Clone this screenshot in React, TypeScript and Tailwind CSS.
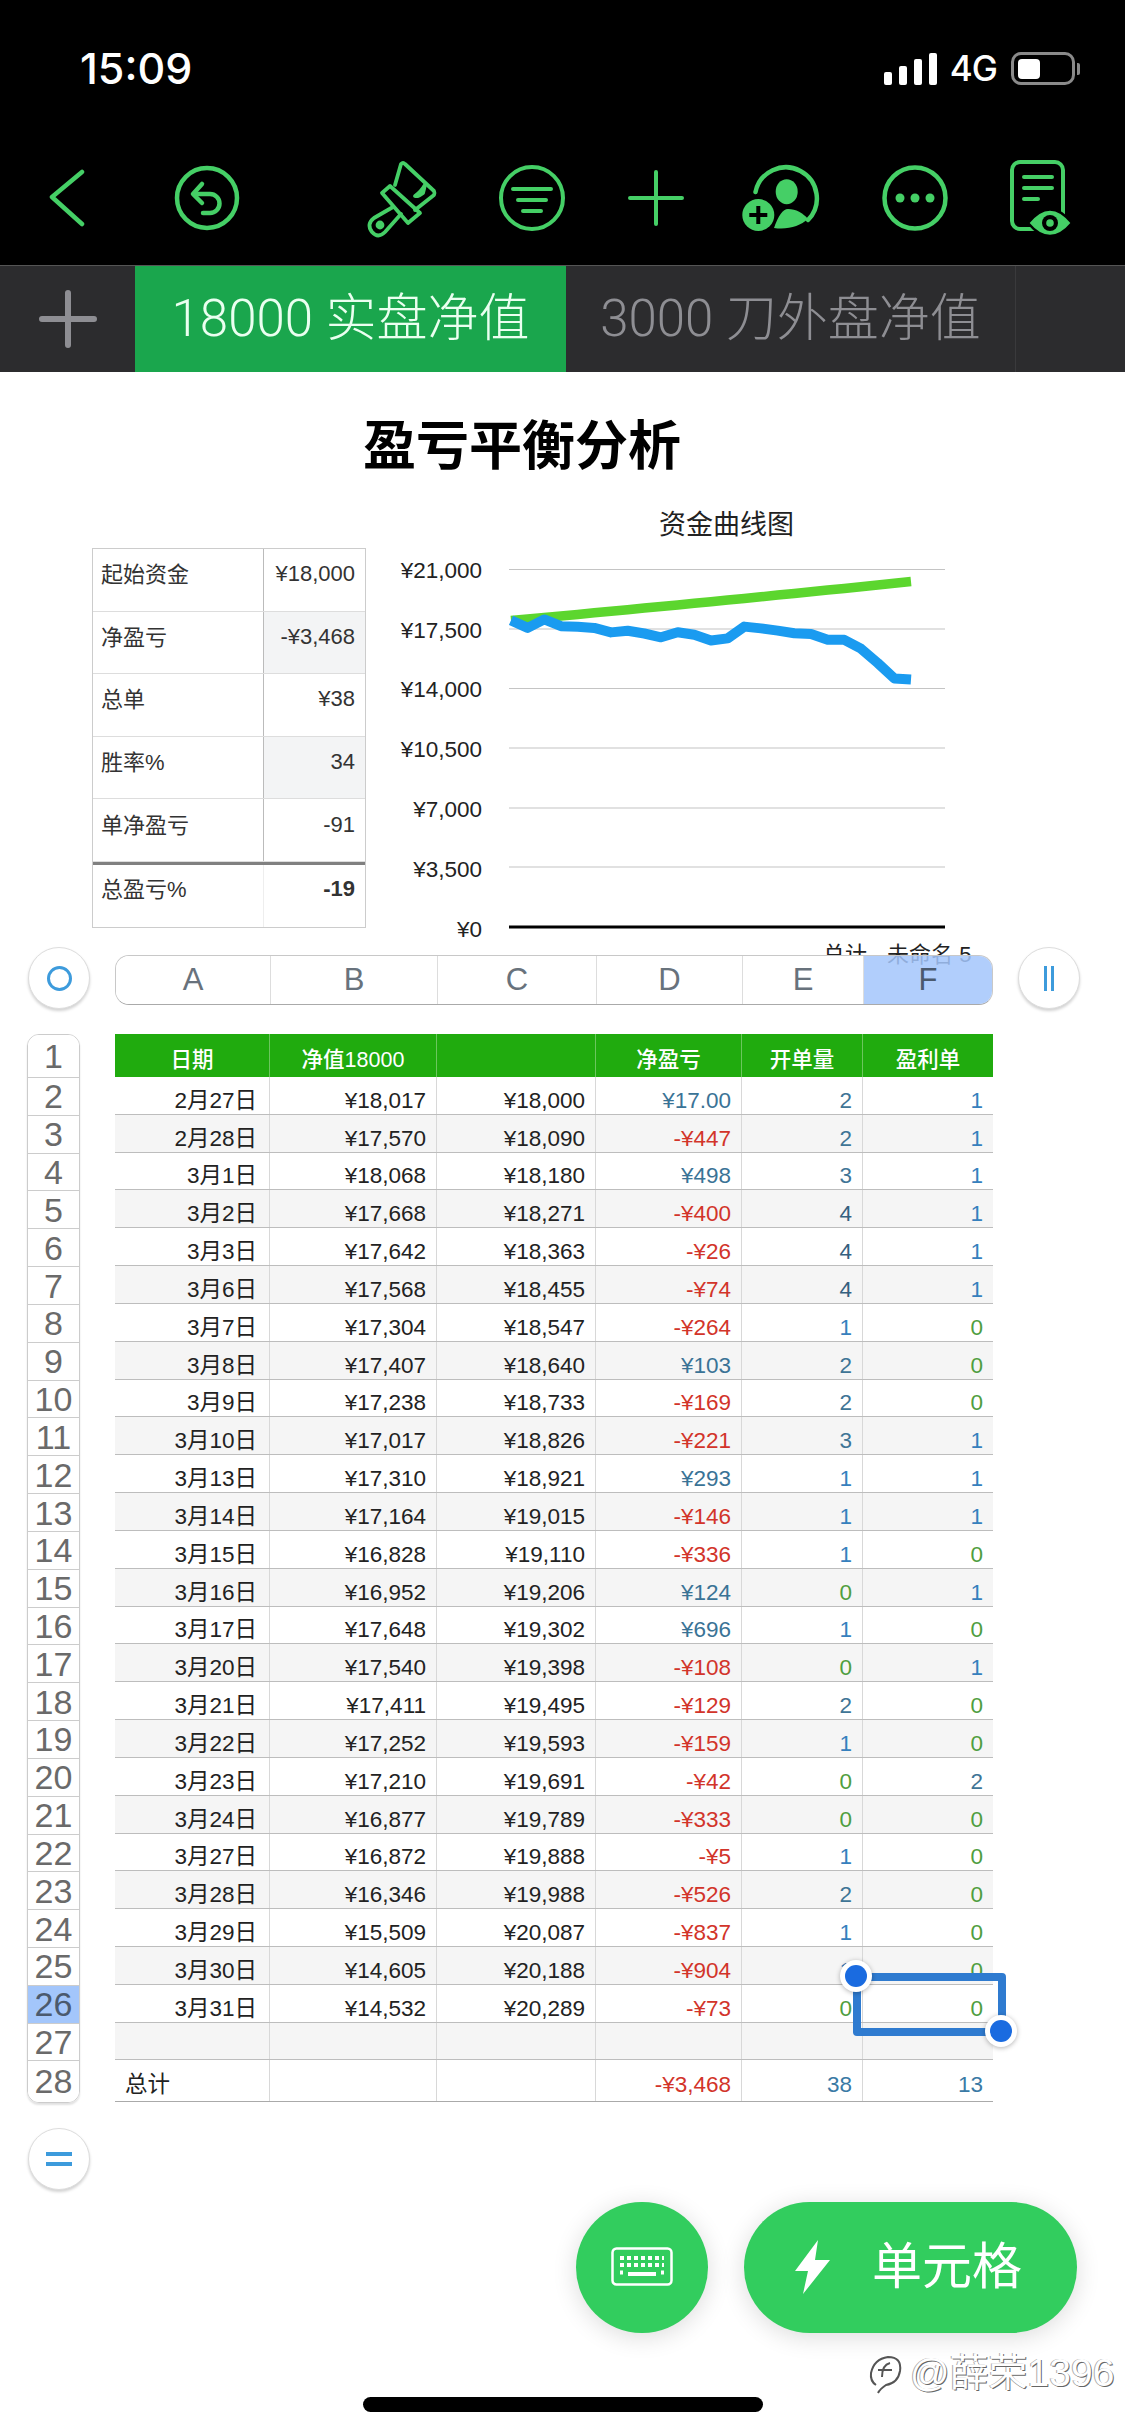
const rows: [string, string, string, string, number, number][] = [
  ["2月27日", "¥18,017", "¥18,000", "¥17.00", 2, 1],
  ["2月28日", "¥17,570", "¥18,090", "-¥447", 2, 1],
  ["3月1日", "¥18,068", "¥18,180", "¥498", 3, 1],
  ["3月2日", "¥17,668", "¥18,271", "-¥400", 4, 1],
  ["3月3日", "¥17,642", "¥18,363", "-¥26", 4, 1],
  ["3月6日", "¥17,568", "¥18,455", "-¥74", 4, 1],
  ["3月7日", "¥17,304", "¥18,547", "-¥264", 1, 0],
  ["3月8日", "¥17,407", "¥18,640", "¥103", 2, 0],
  ["3月9日", "¥17,238", "¥18,733", "-¥169", 2, 0],
  ["3月10日", "¥17,017", "¥18,826", "-¥221", 3, 1],
  ["3月13日", "¥17,310", "¥18,921", "¥293", 1, 1],
  ["3月14日", "¥17,164", "¥19,015", "-¥146", 1, 1],
  ["3月15日", "¥16,828", "¥19,110", "-¥336", 1, 0],
  ["3月16日", "¥16,952", "¥19,206", "¥124", 0, 1],
  ["3月17日", "¥17,648", "¥19,302", "¥696", 1, 0],
  ["3月20日", "¥17,540", "¥19,398", "-¥108", 0, 1],
  ["3月21日", "¥17,411", "¥19,495", "-¥129", 2, 0],
  ["3月22日", "¥17,252", "¥19,593", "-¥159", 1, 0],
  ["3月23日", "¥17,210", "¥19,691", "-¥42", 0, 2],
  ["3月24日", "¥16,877", "¥19,789", "-¥333", 0, 0],
  ["3月27日", "¥16,872", "¥19,888", "-¥5", 1, 0],
  ["3月28日", "¥16,346", "¥19,988", "-¥526", 2, 0],
  ["3月29日", "¥15,509", "¥20,087", "-¥837", 1, 0],
  ["3月30日", "¥14,605", "¥20,188", "-¥904", 1, 0],
  ["3月31日", "¥14,532", "¥20,289", "-¥73", 0, 0],
];

const summary = [
  { label: "起始资金", value: "¥18,000" },
  { label: "净盈亏", value: "-¥3,468", shaded: true },
  { label: "总单", value: "¥38" },
  { label: "胜率%", value: "34", shaded: true },
  { label: "单净盈亏", value: "-91" },
];

const axisLabels = ["¥21,000", "¥17,500", "¥14,000", "¥10,500", "¥7,000", "¥3,500", "¥0"];
const gridY = [14.5, 74, 133.5, 193, 253, 312];

function num(s: string) {
  return Number(s.replace(/[¥,]/g, ""));
}

function linePath(col: 1 | 2) {
  return rows
    .map((r, i) => {
      const x = 2 + (i * 400) / 24;
      const y = 372 - (num(r[col]) / 21000) * 357.5;
      return `${i === 0 ? "M" : "L"}${x.toFixed(1)} ${y.toFixed(1)}`;
    })
    .join(" ");
}

function countColor(n: number) {
  if (n === 0) return "text-[#4f9e3f]";
  if (n === 1) return "text-[#3680bd]";
  if (n === 4) return "text-[#35607f]";
  return "text-[#3f7596]";
}

function Toolbar() {
  const green = "#45cf66";
  return (
    <div className="flex h-[124px] items-center">
      <svg width="36" height="80" className="ml-[49px]" fill="none" stroke={green} strokeWidth="4.5" strokeLinecap="round" strokeLinejoin="round">
        <path d="M33 14 L3 39 L33 66" />
      </svg>
      <svg width="70" height="80" className="ml-[87px]" fill="none" stroke={green} strokeWidth="4.5" strokeLinecap="round" strokeLinejoin="round">
        <circle cx="35" cy="40" r="30" />
        <path d="M30 26 L21 36 L30 45" />
        <path d="M22 36 H38 a9.5 9.5 0 0 1 0 19 H31" />
      </svg>
      <svg width="80" height="80" className="ml-[121px]" fill="none" stroke={green} strokeWidth="3.8" strokeLinecap="round" strokeLinejoin="round">
        <path d="M32 27 L38 6 Q40 4 42 6 L71 33 Q72 35 71 37 L52 52" />
        <path d="M27 28 L19 35 L45 65 L57 55 Z" />
        <path d="M30 49 L11 60 Q3 66 9 74 Q15 81 22 74 L38 56" />
        <circle cx="17" cy="67" r="2.5" fill={green} />
        <path d="M62 27 L60 35 Q55 39 52 38 Q58 34 62 27 Z" fill={green} />
      </svg>
      <svg width="70" height="80" className="ml-[54px]" fill="none" stroke={green} strokeWidth="4" strokeLinecap="round">
        <circle cx="35" cy="40" r="31" />
        <path d="M16 31 H54 M21 42 H49 M26 53 H44" />
      </svg>
      <svg width="70" height="80" className="ml-[54px]" fill="none" stroke={green} strokeWidth="4" strokeLinecap="round">
        <path d="M35 14 V66 M9 40 H61" />
      </svg>
      <svg width="84" height="80" className="ml-[47px]" fill="none">
        <path d="M17.5 34 A31 31 0 1 1 70 62" stroke={green} strokeWidth="4.5" strokeLinecap="round" />
        <ellipse cx="48.7" cy="33.7" rx="11" ry="12.5" fill={green} />
        <path d="M36 70 C40 58 45 51 50 51 C58 51 65 55 70 61 C62 68 50 72 36 70 Z" fill={green} />
        <circle cx="20.3" cy="57" r="16" fill={green} />
        <path d="M20.3 48 V66 M11.3 57 H29.3" stroke="#000" strokeWidth="4" />
      </svg>
      <svg width="70" height="80" className="ml-[58px]" fill="none" stroke={green} strokeWidth="4.5">
        <circle cx="35" cy="40" r="30.5" />
        <circle cx="20" cy="40" r="4.5" fill={green} stroke="none" />
        <circle cx="35" cy="40" r="4.5" fill={green} stroke="none" />
        <circle cx="50" cy="40" r="4.5" fill={green} stroke="none" />
      </svg>
      <svg width="76" height="80" className="ml-[53px]" fill="none" stroke={green} strokeWidth="4" strokeLinecap="round">
        <rect x="9" y="4" width="51" height="67" rx="8" />
        <path d="M21 19 H49 M21 30 H49 M21 41 H35" />
        <path d="M25 65 Q47 38 69 65 Q47 91 25 65 Z" fill={green} stroke="#000" strokeWidth="2.5" />
        <circle cx="47" cy="65" r="8" fill="#000" stroke="none" />
        <circle cx="47" cy="65" r="3.8" fill={green} stroke="none" />
      </svg>
    </div>
  );
}

function StatusBar() {
  return (
    <div className="flex h-[136px] items-center justify-between pl-[80px] pr-[45px] pt-[1px] font-['Inter',sans-serif] text-white">
      <span className="text-[43px] font-medium">15:09</span>
      <div className="flex items-center">
        <div className="flex h-[32px] items-end gap-[7px]">
          <div className="h-[13px] w-[8px] rounded-[2px] bg-white" />
          <div className="h-[19px] w-[8px] rounded-[2px] bg-white" />
          <div className="h-[26px] w-[8px] rounded-[2px] bg-white" />
          <div className="h-[32px] w-[8px] rounded-[2px] bg-white" />
        </div>
        <span className="ml-[13px] text-[35px] font-medium tracking-[-1px]">4G</span>
        <div className="ml-[14px] flex h-[33px] w-[64px] items-center rounded-[10px] border-[3px] border-[#8a8a8a] pl-[4px]">
          <div className="h-[20px] w-[22px] rounded-[4px] bg-white" />
        </div>
        <div className="ml-[2px] h-[12px] w-[3px] rounded-r-[2px] bg-[#8a8a8a]" />
      </div>
    </div>
  );
}

function TabBar() {
  return (
    <div className="flex h-[107px] border-t border-[#555] bg-[#2c2c2e] font-['Roboto','Noto_Sans_CJK_SC',sans-serif] text-[51px] font-light">
      <div className="flex w-[135px] items-center justify-center">
        <svg width="60" height="60" fill="none" stroke="#8e8e93" strokeWidth="6" strokeLinecap="round">
          <path d="M30 4 V56 M4 30 H56" />
        </svg>
      </div>
      <div className="flex w-[431px] items-center justify-center bg-[#1aa64d] text-[#eafff0]">18000 实盘净值</div>
      <div className="flex w-[450px] items-center justify-center border-r border-[#3a3a3c] text-[#8e8e93]">3000 刀外盘净值</div>
    </div>
  );
}

function SummaryTable() {
  return (
    <div className="mt-[43px] w-[274px] self-start border border-[#ccc] text-[22px] text-[#333]">
      {summary.map((s) => (
        <div key={s.label} className="flex h-[62.6px] border-b border-[#ddd]">
          <div className="flex w-[171px] items-center border-r border-[#bbb] pb-[10px] pl-[8px]">{s.label}</div>
          <div className={`flex flex-1 items-center justify-end pb-[12px] pr-[10px] ${s.shaded ? "bg-[#f3f4f5]" : ""}`}>{s.value}</div>
        </div>
      ))}
      <div className="flex h-[65px] border-t-[3px] border-[#808080]">
        <div className="flex w-[171px] items-center border-r border-[#eee] pb-[12px] pl-[8px]">总盈亏%</div>
        <div className="flex flex-1 items-center justify-end pb-[14px] pr-[10px] font-bold">-19</div>
      </div>
    </div>
  );
}

function Chart() {
  return (
    <div className="relative ml-[4px] w-[579px]">
      <div className="flex h-[40px] items-center justify-center pl-[134px] text-[27px] text-[#222]">资金曲线图</div>
      <div className="mt-[10px] flex">
        <div className="flex h-[390px] w-[112px] flex-col justify-between pt-[1px] text-right text-[22.5px] text-[#222]">
          {axisLabels.map((t) => (
            <div key={t} className="flex h-[30px] items-center justify-end leading-none">{t}</div>
          ))}
        </div>
        <svg width="436" height="387" className="ml-[27px]" fill="none">
          {gridY.map((y) => (
            <line key={y} x1="0" x2="436" y1={y} y2={y} stroke="#c4c4c4" strokeWidth="1.2" />
          ))}
          <line x1="0" x2="436" y1="372" y2="372" stroke="#000" strokeWidth="3" />
          <path d={linePath(2)} stroke="#5cd62e" strokeWidth="9.5" strokeLinejoin="round" />
          <path d={linePath(1)} stroke="#1a9bf0" strokeWidth="10" strokeLinejoin="round" />
        </svg>
      </div>
      <div className="absolute left-[453px] top-[438px] flex gap-[20px] whitespace-nowrap text-[22px] leading-[24px] text-[#222]">
        <span>总计</span>
        <span>未命名 5</span>
      </div>
    </div>
  );
}

function RoundButton({ children }: { children: React.ReactNode }) {
  return (
    <div className="flex h-[62px] w-[62px] items-center justify-center rounded-full border border-[#ddd] bg-white shadow-[0_2px_3px_rgba(0,0,0,0.18)]">
      {children}
    </div>
  );
}

function ColumnBar() {
  const cols = [
    { name: "A", w: "w-[155px]" },
    { name: "B", w: "w-[167px]" },
    { name: "C", w: "w-[159px]" },
    { name: "D", w: "w-[146px]" },
    { name: "E", w: "w-[121px]" },
  ];
  return (
    <div className="relative z-10 mt-[2px] flex items-start pl-[28px]">
      <RoundButton>
        <div className="h-[25px] w-[25px] rounded-full border-[3.5px] border-[#3d9bdc]" />
      </RoundButton>
      <div className="ml-[25px] mt-[8px] flex h-[50px] w-[878px] overflow-hidden rounded-[14px] border border-[#c8c8c8] border-b-[#aaa] text-[31px] text-[#68727c]">
        {cols.map((c) => (
          <div key={c.name} className={`flex ${c.w} items-center justify-center border-r border-[#ddd] bg-white`}>{c.name}</div>
        ))}
        <div className="flex flex-1 items-center justify-center bg-[#a3c6fb]/85 text-[#4b5a6e]">F</div>
      </div>
      <div className="ml-[25px]">
        <RoundButton>
          <div className="flex gap-[4px]">
            <div className="h-[25px] w-[3px] bg-[#3d9bdc]" />
            <div className="h-[25px] w-[3px] bg-[#3d9bdc]" />
          </div>
        </RoundButton>
      </div>
    </div>
  );
}

function RowHeaders() {
  const nums = Array.from({ length: 28 }, (_, i) => i + 1);
  return (
    <div className="w-[53px] overflow-hidden rounded-b-[12px] rounded-t-[12px] border-x border-b border-t border-[#ccc] text-center text-[34px] leading-none text-[#6a6a6a] shadow-[0_2px_2px_rgba(0,0,0,0.12)]">
      {nums.map((n) => (
        <div
          key={n}
          className={`flex items-center justify-center border-b border-[#ccc] last:border-b-0 ${
            n === 1 ? "h-[43px]" : n === 27 ? "h-[37px]" : n === 28 ? "h-[41px]" : "h-[37.83px]"
          } ${n === 26 ? "bg-[#a3c6fb] text-[#4b5a6e]" : "bg-white"}`}
        >
          {n}
        </div>
      ))}
    </div>
  );
}

const cell = "flex items-end justify-end border-r border-[#d8d8d8] last:border-r-0";
const val = `${cell} pr-[10px]`;
const totalVal = `${cell} pb-[3px] pr-[10px]`;
const gridCols = "grid grid-cols-[155px_167px_159px_146px_121px_130px]";

function DataTable() {
  return (
    <div className="relative ml-[35px] w-[878px] text-[22.5px] leading-[26px] text-[#222]">
      <div className={`${gridCols} h-[43px] bg-[#20ab0e] text-[21.5px] font-medium leading-[30px] text-white`}>
        {["日期", "净值18000", "", "净盈亏", "开单量", "盈利单"].map((h, i) => (
          <div key={i} className="flex items-end justify-center border-r border-[#6cc65e] pb-[2px] last:border-r-0">{h}</div>
        ))}
      </div>
      {rows.map((r, i) => (
        <div key={r[0]} className={`${gridCols} h-[37.83px] border-b border-[#bdbdbd] ${i % 2 === 1 ? "bg-[#f5f5f5]" : "bg-white"}`}>
          <div className={`${cell} pr-[12px]`}>{r[0]}</div>
          <div className={val}>{r[1]}</div>
          <div className={val}>{r[2]}</div>
          <div className={`${val} ${r[3].startsWith("-") ? "text-[#d2342a]" : "text-[#3a7396]"}`}>{r[3]}</div>
          <div className={`${val} ${countColor(r[4])}`}>{r[4]}</div>
          <div className={`${val} ${countColor(r[5])}`}>{r[5]}</div>
        </div>
      ))}
      <div className={`${gridCols} h-[37px] border-b border-[#bdbdbd] bg-[#f5f5f5]`}>
        {[0, 1, 2, 3, 4, 5].map((i) => (
          <div key={i} className={cell} />
        ))}
      </div>
      <div className={`${gridCols} h-[42px] border-b border-[#aaa] bg-white`}>
        <div className="flex items-end border-r border-[#d8d8d8] pb-[3px] pl-[10px]">总计</div>
        <div className={cell} />
        <div className={cell} />
        <div className={`${totalVal} text-[#d2342a]`}>-¥3,468</div>
        <div className={`${totalVal} text-[#3a7aa5]`}>38</div>
        <div className={`${totalVal} text-[#3a7aa5]`}>13</div>
      </div>
      {/* selected cell frame hangs over the grid */}
      <div className="absolute left-[738px] top-[939px] h-[63px] w-[153px] rounded-[4px] border-[8px] border-[#2f7bd0]" />
      <div className="absolute left-[725px] top-[926px] flex h-[32px] w-[32px] items-center justify-center rounded-full bg-white shadow-[0_1px_5px_rgba(0,0,0,0.3)]">
        <div className="h-[22px] w-[22px] rounded-full bg-[#1a6be0]" />
      </div>
      <div className="absolute left-[870px] top-[981px] flex h-[32px] w-[32px] items-center justify-center rounded-full bg-white shadow-[0_1px_5px_rgba(0,0,0,0.3)]">
        <div className="h-[22px] w-[22px] rounded-full bg-[#1a6be0]" />
      </div>
    </div>
  );
}

function ActionButtons() {
  return (
    <div className="mt-[12px] flex justify-end gap-[36px] pr-[48px]">
      <div className="flex h-[131px] w-[132px] items-center justify-center rounded-full bg-[#32cd5e] shadow-[0_4px_24px_rgba(0,0,0,0.14)]">
        <svg width="62" height="40" fill="none" stroke="#fff" strokeWidth="2.5">
          <rect x="1.5" y="1.5" width="59" height="36" rx="4" />
          <path d="M9 11 H53 M9 18 H53" strokeWidth="4" strokeDasharray="4 3" />
          <path d="M9 25.5 H12 M50 25.5 H53" strokeWidth="4" />
          <path d="M17 27 H45" strokeWidth="4" />
        </svg>
      </div>
      <div className="flex h-[131px] w-[333px] items-center rounded-full bg-[#32cd5e] pl-[51px] text-[50px] text-white shadow-[0_4px_24px_rgba(0,0,0,0.14)]">
        <svg width="35" height="54" fill="#fff">
          <path d="M23 0 L0 31 L13 31 L8 54 L35 20 L20 20 Z" />
        </svg>
        <span className="ml-[42px]">单元格</span>
      </div>
    </div>
  );
}

export default function App() {
  return (
    <div className="relative flex h-[2436px] w-[1125px] flex-col overflow-hidden bg-white font-['Liberation_Sans','Noto_Sans_CJK_SC',sans-serif]">
      <div className="h-[265px] bg-black">
        <StatusBar />
        <Toolbar />
      </div>
      <TabBar />
      <div className="ml-[92px] flex h-[133px] w-[860px] items-center justify-center pt-[16px] text-[53px] font-bold text-black">盈亏平衡分析</div>
      <div className="flex pl-[92px]">
        <SummaryTable />
        <Chart />
      </div>
      <ColumnBar />
      <div className="mt-[25px] flex pl-[27px]">
        <RowHeaders />
        <DataTable />
      </div>
      <div className="ml-[28px] mt-[25px]">
        <RoundButton>
          <div className="flex flex-col gap-[6px]">
            <div className="h-[4px] w-[26px] bg-[#3d9bdc]" />
            <div className="h-[4px] w-[26px] bg-[#3d9bdc]" />
          </div>
        </RoundButton>
      </div>
      <ActionButtons />
      <div className="mx-auto mt-[64px] h-[15px] w-[400px] rounded-full bg-black" />
      {/* watermark sits over the page corner */}
      <div className="absolute left-[866px] top-[2344px] flex items-center text-[39px] text-white [text-shadow:1px_1px_0_#666,-1px_0_0_#aaa]">
        <svg width="40" height="44" fill="none" stroke="#555" strokeWidth="2">
          <path d="M10 34 Q4 30 5 22 Q8 8 22 6 Q36 6 34 20 Q32 32 20 34 Q14 38 12 42 M24 12 Q16 14 16 26 M12 19 H26" />
        </svg>
        <span className="ml-[4px]">@薛荣1396</span>
      </div>
    </div>
  );
}
